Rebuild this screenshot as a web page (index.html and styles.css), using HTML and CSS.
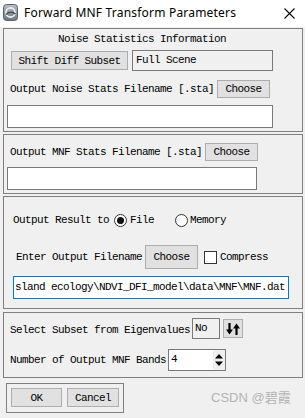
FILE: index.html
```html
<!DOCTYPE html>
<html>
<head>
<meta charset="utf-8">
<link rel="stylesheet" href="styles.css">
</head>
<body>
<div class="titlebar">
  <svg class="appicon" width="15" height="17" viewBox="0 0 15 17">
    <defs>
      <linearGradient id="g1" x1="0" y1="0" x2="0" y2="1">
        <stop offset="0" stop-color="#b9c0c6"/>
        <stop offset="1" stop-color="#6c7680"/>
      </linearGradient>
    </defs>
    <rect x="0.5" y="0.5" width="14" height="16" rx="3" fill="url(#g1)" stroke="#5a636b"/>
    <circle cx="7.5" cy="8.5" r="4.6" fill="none" stroke="#eef1f3" stroke-width="1.6"/>
    <path d="M3 10.5 Q7.5 6 12.5 10" fill="none" stroke="#3c454d" stroke-width="1.4"/>
  </svg>
  <span class="title">Forward MNF Transform Parameters</span>
  <svg class="close" width="11" height="11" viewBox="0 0 11 11">
    <path d="M0.5 0.5 L10.5 10.5 M10.5 0.5 L0.5 10.5" stroke="#000" stroke-width="1.1" fill="none"/>
  </svg>
</div>

<div class="content">
  <section class="panel p1">
    <div class="heading">Noise Statistics Information</div>
    <div class="row r-shift">
      <div class="btn btn-shift">Shift Diff Subset</div>
      <div class="field ro full">Full Scene</div>
    </div>
    <div class="row r-choose">
      <span class="label lbl-noise">Output Noise Stats Filename [.sta]</span>
      <div class="btn choose">Choose</div>
    </div>
    <div class="field f1"></div>
  </section>

  <section class="panel p2">
    <div class="row r-choose">
      <span class="label lbl-noise">Output MNF Stats Filename [.sta]</span>
      <div class="btn choose">Choose</div>
    </div>
    <div class="field f2"></div>
  </section>

  <section class="panel p3">
    <div class="row r-radio">
      <span class="label lbl-result">Output Result to</span>
      <span class="radio checked"></span>
      <span class="opt opt-file">File</span>
      <span class="radio radio-mem"></span>
      <span class="opt opt-mem">Memory</span>
    </div>
    <div class="row r-enter">
      <span class="label lbl-enter">Enter Output Filename</span>
      <div class="btn choose choose-tall">Choose</div>
      <span class="checkbox"></span>
      <span class="opt opt-comp">Compress</span>
    </div>
    <div class="field f3 focused">sland ecology\NDVI_DFI_model\data\MNF\MNF.dat</div>
  </section>

  <section class="panel p4">
    <div class="row r-subset">
      <span class="label lbl-noise">Select Subset from Eigenvalues</span>
      <div class="field ro nobox">No</div>
      <div class="btn toggle">
        <svg width="14" height="12" viewBox="0 0 14 12">
          <path d="M3.5 0 V7" stroke="#000" stroke-width="2.2"/>
          <path d="M0 6.5 L3.5 11.5 L7 6.5 Z" fill="#000"/>
          <path d="M10.5 12 V5" stroke="#000" stroke-width="2.2"/>
          <path d="M7 5.5 L10.5 0.5 L14 5.5 Z" fill="#000"/>
        </svg>
      </div>
    </div>
    <div class="row r-bands">
      <span class="label lbl-noise">Number of Output MNF Bands</span>
      <div class="field spinner">
        <span class="spin-val">4</span>
        <span class="spin-btns">
          <svg width="10" height="16" viewBox="0 0 10 16">
            <path d="M1 6.5 L5 2 L9 6.5 Z" fill="#000"/>
            <path d="M1 9.5 L5 14 L9 9.5 Z" fill="#000"/>
          </svg>
        </span>
      </div>
    </div>
  </section>

  <div class="actions">
    <div class="btn ok">OK</div>
    <div class="btn cancel">Cancel</div>
  </div>
</div>

<div class="watermark">CSDN @碧霞</div>
</body>
</html>
```

FILE: styles.css
```css
* {
  box-sizing: border-box;
  margin: 0;
  padding: 0;
}

html, body {
  width: 305px;
  height: 418px;
  overflow: hidden;
}

body {
  position: relative;
  background: #f0f0f0;
  color: #000;
  font-family: "Liberation Mono", "DejaVu Sans Mono", monospace;
  font-size: 11px;
  letter-spacing: -0.6px;
}

/* title bar */
.titlebar {
  height: 27px;
  background: #fff;
  display: flex;
  align-items: flex-start;
}

.appicon {
  margin: 4px 0 0 3px;
}

.title {
  margin: 5px 0 0 6px;
  font-family: "Noto Sans", "Liberation Sans", sans-serif;
  font-size: 12px;
  letter-spacing: 0.2px;
  line-height: 16px;
}

.close {
  margin: 8px 10px 0 auto;
}

/* content */
.content {
  padding: 1px 2px 0 3px;
}

.panel {
  width: 300px;
  border: 1px solid #7f7f7f;
  display: flex;
  flex-direction: column;
  align-items: flex-start;
}

.row {
  display: flex;
  align-items: center;
  white-space: pre;
}

.label {
  line-height: 14px;
}

.btn {
  background: #e1e1e1;
  border: 1px solid #adadad;
  display: flex;
  align-items: center;
  justify-content: center;
  line-height: 14px;
}

.field {
  border: 1px solid #7a7a7a;
  background: #fff;
  line-height: 14px;
  padding: 1px 0 0 2px;
  white-space: pre;
}

.field.ro {
  background: #f0f0f0;
}

/* panel 1 */
.p1 {
  padding: 3px 0 3px 0;
}

.heading {
  height: 14px;
  line-height: 14px;
  padding-left: 54px;
}

.r-shift {
  margin-top: 4px;
  height: 21px;
}

.btn-shift {
  margin-left: 7px;
  width: 117px;
  height: 19px;
}

.full {
  margin-left: 4px;
  width: 141px;
  height: 21px;
  padding-left: 3px;
  padding-top: 2px;
}

.r-choose {
  margin-top: 9px;
  height: 18px;
}

.lbl-noise {
  margin-left: 6px;
}

.choose {
  margin-left: 3px;
  width: 53px;
  height: 18px;
}

.f1 {
  margin: 7px 0 0 3px;
  width: 266px;
  height: 23px;
}

/* panel 2 */
.p2 {
  margin-top: 2px;
  padding: 0 0 3px 0;
}

.p2 .r-choose {
  margin-top: 8px;
}

.f2 {
  margin: 6px 0 0 3px;
  width: 250px;
  height: 23px;
}

/* panel 3 */
.p3 {
  margin-top: 2px;
  padding: 16px 0 9px 0;
}

.r-radio {
  height: 14px;
}

.lbl-result {
  margin-left: 9px;
}

.radio {
  width: 13px;
  height: 13px;
  border: 1px solid #333;
  border-radius: 50%;
  background: #fff;
  display: flex;
  align-items: center;
  justify-content: center;
}

.radio.checked {
  margin-left: 5px;
}

.radio.checked::after {
  content: "";
  width: 7px;
  height: 7px;
  border-radius: 50%;
  background: #111;
}

.opt-file {
  margin-left: 3px;
}

.radio-mem {
  margin-left: 21px;
}

.opt-mem {
  margin-left: 2px;
}

.r-enter {
  margin-top: 18px;
  height: 24px;
}

.lbl-enter {
  margin-left: 12px;
}

.choose-tall {
  height: 24px;
}

.checkbox {
  margin-left: 6px;
  width: 13px;
  height: 13px;
  border: 1px solid #333;
  background: #fff;
}

.opt-comp {
  margin-left: 3px;
}

.f3 {
  margin: 7px 0 0 9px;
  width: 276px;
  height: 23px;
  padding: 3px 0 0 1px;
}

.field.focused {
  border-color: #0078d7;
}

/* panel 4 */
.p4 {
  margin-top: 3px;
  padding: 5px 0 6px 0;
}

.r-subset {
  height: 22px;
  align-items: flex-start;
}

.r-subset .label {
  margin-top: 5px;
}

.nobox {
  margin-left: 2px;
  width: 28px;
  height: 21px;
  padding: 2px 0 0 2px;
}

.toggle {
  margin: 1px 0 0 3px;
  width: 20px;
  height: 19px;
}

.r-bands {
  margin-top: 9px;
  height: 22px;
}

.spinner {
  margin-left: 2px;
  width: 58px;
  height: 22px;
  padding: 0;
  display: flex;
  align-items: stretch;
}

.spin-val {
  flex: 1;
  padding: 2px 0 0 2px;
}

.spin-btns {
  width: 12px;
  background: #f0f0f0;
  display: flex;
  align-items: center;
  justify-content: center;
}

/* bottom actions */
.actions {
  margin: 5px 0 0 3px;
  width: 118px;
  height: 30px;
  border: 1px solid #7f7f7f;
  padding: 4px 4px 0 4px;
  display: flex;
  align-items: flex-start;
  gap: 5px;
}

.ok {
  width: 51px;
  height: 19px;
}

.cancel {
  width: 52px;
  height: 19px;
}

/* watermark overlay */
.watermark {
  position: absolute;
  left: 211px;
  top: 389px;
  font-family: "Liberation Sans", "Noto Sans CJK SC", sans-serif;
  font-size: 13px;
  letter-spacing: 0;
  color: #b4b4b4;
  line-height: 18px;
}
```
